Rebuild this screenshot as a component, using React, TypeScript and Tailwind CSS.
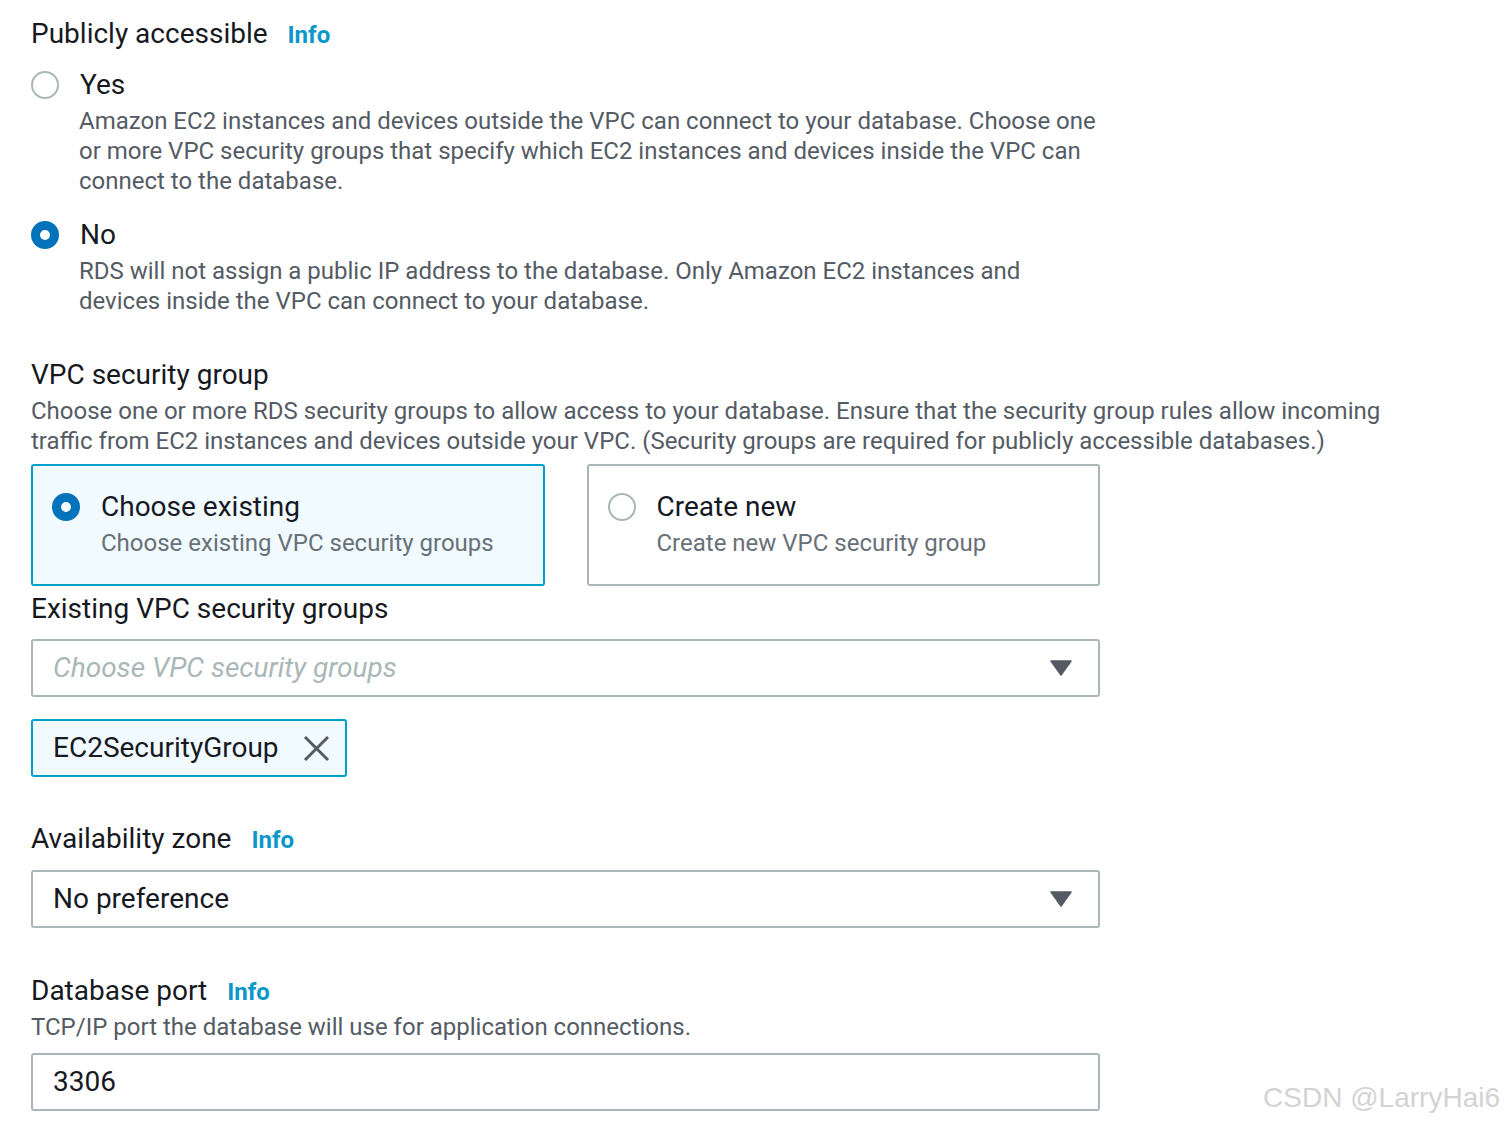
import React from "react";

const font = { fontFamily: "Roboto, 'Noto Sans', sans-serif" };

function Info() {
  return <span className="ml-[20px] text-[24px] font-bold leading-none text-[#0a97c9]">Info</span>;
}

function Radio({ checked }: { checked?: boolean }) {
  return checked ? (
    <span className="box-border block h-[28px] w-[28px] shrink-0 rounded-full border-[9px] border-[#0073bb] bg-white" />
  ) : (
    <span className="box-border block h-[28px] w-[28px] shrink-0 rounded-full border-2 border-[#aab7b8] bg-white" />
  );
}

function Caret() {
  return (
    <svg width="22" height="16" viewBox="0 0 22 16" className="shrink-0">
      <path d="M1 1 H21 L11 15 Z" fill="#545b64" stroke="#545b64" strokeWidth="1.5" strokeLinejoin="round" />
    </svg>
  );
}

function Option({ label, desc, checked, className = "" }: { label: string; desc: string; checked?: boolean; className?: string }) {
  return (
    <div className={className}>
      <div className="flex items-center gap-[21px]">
        <Radio checked={checked} />
        <span className="text-[28px] leading-[36px] text-[#16191f]">{label}</span>
      </div>
      <p className="mt-[3px] w-[1068px] pl-[48px] text-[24px] leading-[30px] text-[#545b64]">{desc}</p>
    </div>
  );
}

function Card({ label, desc, checked }: { label: string; desc: string; checked?: boolean }) {
  return (
    <div
      className={
        checked
          ? "box-border h-[122px] rounded-[3px] border-2 border-[#00a1c9] bg-[#f1faff] pl-[19px] pt-[23px]"
          : "box-border h-[122px] rounded-[3px] border-2 border-[#aab7b8] bg-white pl-[19px] pt-[23px]"
      }
    >
      <div className="flex items-center gap-[21px]">
        <Radio checked={checked} />
        <span className="text-[28px] leading-[36px] text-[#16191f]">{label}</span>
      </div>
      <p className="pl-[49px] text-[24px] leading-[36px] text-[#687078]">{desc}</p>
    </div>
  );
}

export default function App() {
  return (
    <div className="relative h-[1124px] w-full overflow-hidden bg-white" style={font}>
      <div className="pl-[31px]">
        <h2 className="mt-[16px] text-[28px] leading-[36px] text-[#16191f]">
          Publicly accessible<Info />
        </h2>

        <Option
          className="mt-[15px]"
          label="Yes"
          desc="Amazon EC2 instances and devices outside the VPC can connect to your database. Choose one or more VPC security groups that specify which EC2 instances and devices inside the VPC can connect to the database."
        />
        <Option
          className="mt-[21px]"
          checked
          label="No"
          desc="RDS will not assign a public IP address to the database. Only Amazon EC2 instances and devices inside the VPC can connect to your database."
        />

        <h2 className="mt-[41px] text-[28px] leading-[36px] text-[#16191f]">VPC security group</h2>
        <p className="mt-[3px] w-[1400px] text-[24px] leading-[30px] text-[#545b64]">
          Choose one or more RDS security groups to allow access to your database. Ensure that the security group rules allow incoming traffic from EC2 instances and devices outside your VPC. (Security groups are required for publicly accessible databases.)
        </p>

        <div className="mt-[8px] grid w-[1069px] grid-cols-2 gap-[42px]">
          <Card checked label="Choose existing" desc="Choose existing VPC security groups" />
          <Card label="Create new" desc="Create new VPC security group" />
        </div>

        <h3 className="mt-[5px] text-[28px] leading-[36px] text-[#16191f]">Existing VPC security groups</h3>
        <div className="mt-[12px] box-border flex h-[58px] w-[1069px] items-center justify-between rounded-[3px] border-2 border-[#aab7b8] pl-[20px] pr-[26px]">
          <span className="text-[28px] italic text-[#aab7b8]">Choose VPC security groups</span>
          <Caret />
        </div>

        <div className="mt-[22px] box-border flex h-[58px] w-[316px] items-center justify-between rounded-[3px] border-2 border-[#00a1c9] bg-[#f1faff] pl-[20px] pr-[15px]">
          <span className="text-[28px] text-[#16191f]">EC2SecurityGroup</span>
          <svg width="27" height="27" viewBox="0 0 27 27">
            <path d="M2 2 L25 25 M25 2 L2 25" stroke="#545b64" strokeWidth="3" />
          </svg>
        </div>

        <h2 className="mt-[44px] text-[28px] leading-[36px] text-[#16191f]">
          Availability zone<Info />
        </h2>
        <div className="mt-[13px] box-border flex h-[58px] w-[1069px] items-center justify-between rounded-[3px] border-2 border-[#aab7b8] pl-[20px] pr-[26px]">
          <span className="text-[28px] text-[#16191f]">No preference</span>
          <Caret />
        </div>

        <h2 className="mt-[45px] text-[28px] leading-[36px] text-[#16191f]">
          Database port<Info />
        </h2>
        <p className="mt-[3px] text-[24px] leading-[30px] text-[#545b64]">
          TCP/IP port the database will use for application connections.
        </p>
        <div className="mt-[11px] box-border flex h-[58px] w-[1069px] items-center rounded-[3px] border-2 border-[#aab7b8] pl-[20px]">
          <span className="text-[28px] text-[#16191f]">3306</span>
        </div>
      </div>

      <span
        className="absolute bottom-[5px] right-[6px] text-[28px] text-[#d3d3d3]"
        style={{ fontFamily: "'Liberation Sans', Arial, sans-serif" }}
      >
        CSDN @LarryHai6
      </span>
    </div>
  );
}
